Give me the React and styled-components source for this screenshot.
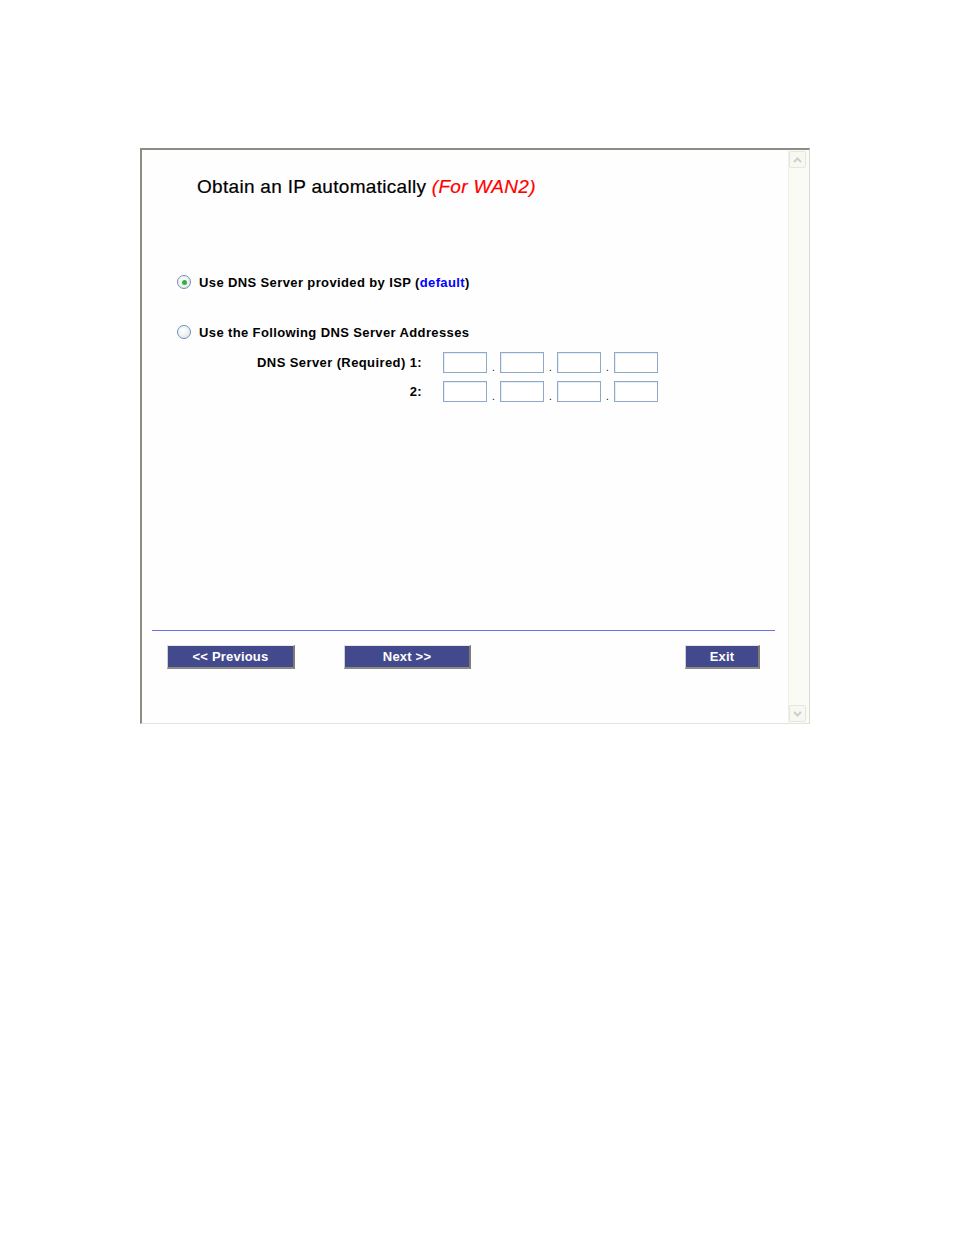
import React from "react";
import styled, { createGlobalStyle } from "styled-components";

const Global = createGlobalStyle`
  html, body { margin: 0; padding: 0; background: #ffffff; }
  body { font-family: "Liberation Sans", Arial, sans-serif; }
`;

const Page = styled.div`
  width: 954px;
  height: 1235px;
  padding: 148px 0 0 140px;
  box-sizing: border-box;
`;

const Frame = styled.div`
  width: 670px;
  height: 576px;
  box-sizing: border-box;
  display: flex;
  border-top: 2px solid #8c8c84;
  border-left: 2px solid #8c8c84;
  border-right: 1px solid #dcdcd4;
  border-bottom: 1px solid #e4e4dc;
  background: #fefefe;
`;

const Content = styled.div`
  flex: 1;
  display: flex;
  flex-direction: column;
  padding: 0 13px 0 10px;
`;

const Title = styled.h1`
  margin: 26px 0 0 45px;
  font-size: 19px;
  line-height: 22px;
  font-weight: normal;
  color: #000;
  letter-spacing: 0.3px;
  -webkit-text-stroke: 0.2px #000;
`;

const Red = styled.span`
  color: #ff0000;
  font-style: italic;
  -webkit-text-stroke: 0.2px #ff0000;
`;

const RadioRow = styled.label`
  display: flex;
  align-items: center;
  gap: 8px;
  height: 16px;
  margin: ${(p) => p.$top}px 0 0 25px;
  font-size: 13px;
  font-weight: bold;
  letter-spacing: 0.38px;
  color: #000;
`;

const RadioDot = styled.span`
  width: 14px;
  height: 14px;
  border-radius: 50%;
  box-sizing: border-box;
  border: 1px solid #6f8fb5;
  background: radial-gradient(circle at 40% 35%, #ffffff 0%, #eef0f2 55%, #d8dce2 100%);
  display: flex;
  align-items: center;
  justify-content: center;
  &::after {
    content: "";
    width: 5px;
    height: 5px;
    border-radius: 50%;
    background: ${(p) => (p.$checked ? "#2fb43a" : "transparent")};
  }
`;

const Blue = styled.span`
  color: #0000ff;
`;

const DnsGrid = styled.div`
  display: grid;
  grid-template-columns: 270px auto;
  column-gap: 21px;
  row-gap: 8px;
  margin-top: 12px;
  align-items: center;
`;

const DnsLabel = styled.div`
  text-align: right;
  font-size: 13px;
  font-weight: bold;
  letter-spacing: 0.4px;
  color: #000;
`;

const IpGroup = styled.div`
  display: flex;
  align-items: flex-end;
`;

const IpBox = styled.input`
  width: 44px;
  height: 21px;
  box-sizing: border-box;
  border: 1px solid #8fa9cb;
  box-shadow: inset 1px 1px 0 #e6edf5;
  background: #ffffff;
  padding: 0;
  margin: 0;
  outline: none;
`;

const Dot = styled.span`
  width: 13px;
  text-align: center;
  font-size: 10px;
  line-height: 10px;
  color: #000;
`;

const Rule = styled.hr`
  margin: auto 0 0 0;
  border: none;
  border-top: 1px solid #6e6ee6;
  height: 0;
`;

const ButtonBar = styled.div`
  display: flex;
  align-items: center;
  padding: 14px 15px 0 15px;
  height: 23px;
  margin-bottom: 55px;
`;

const NavButton = styled.button`
  width: ${(p) => p.$w}px;
  height: 24px;
  margin-right: ${(p) => p.$gap || 0}px;
  margin-left: ${(p) => (p.$right ? "auto" : "0")};
  box-sizing: border-box;
  background: #424a8d;
  color: #ffffff;
  font-family: "Liberation Sans", Arial, sans-serif;
  font-weight: bold;
  font-size: 13px;
  letter-spacing: 0.2px;
  padding: 0;
  border-top: 1px solid #e8e8e0;
  border-left: 1px solid #d0d0c8;
  border-right: 2px solid #7c7c74;
  border-bottom: 2px solid #8c8c84;
  cursor: pointer;
`;

const Scrollbar = styled.div`
  width: 19px;
  display: flex;
  flex-direction: column;
  justify-content: space-between;
  background: #fbfbf6;
  border-left: 1px solid #efefe8;
  padding: 1px 1px 1px 0;
`;

const ScrollBtn = styled.div`
  width: 17px;
  height: 17px;
  box-sizing: border-box;
  border: 1px solid #e6e6de;
  border-radius: 2px;
  background: #f8f8f3;
  display: flex;
  align-items: center;
  justify-content: center;
`;

const Chevron = ({ down }) => (
  <svg width="9" height="6" viewBox="0 0 9 6">
    <path
      d={down ? "M1 1 L4.5 4.5 L8 1" : "M1 5 L4.5 1.5 L8 5"}
      fill="none"
      stroke="#cfcfca"
      strokeWidth="2"
    />
  </svg>
);

const IpInputs = () => (
  <IpGroup>
    <IpBox />
    <Dot>.</Dot>
    <IpBox />
    <Dot>.</Dot>
    <IpBox />
    <Dot>.</Dot>
    <IpBox />
  </IpGroup>
);

export default function App() {
  return (
    <>
      <Global />
      <Page>
        <Frame>
          <Content>
            <Title>
              Obtain an IP automatically <Red>(For WAN2)</Red>
            </Title>
            <RadioRow $top={76}>
              <RadioDot $checked />
              <span>
                Use DNS Server provided by ISP (<Blue>default</Blue>)
              </span>
            </RadioRow>
            <RadioRow $top={34}>
              <RadioDot />
              <span>Use the Following DNS Server Addresses</span>
            </RadioRow>
            <DnsGrid>
              <DnsLabel>DNS Server (Required) 1:</DnsLabel>
              <IpInputs />
              <DnsLabel>2:</DnsLabel>
              <IpInputs />
            </DnsGrid>
            <Rule />
            <ButtonBar>
              <NavButton $w={128} $gap={49}>&lt;&lt; Previous</NavButton>
              <NavButton $w={127}>Next &gt;&gt;</NavButton>
              <NavButton $w={75} $right>Exit</NavButton>
            </ButtonBar>
          </Content>
          <Scrollbar>
            <ScrollBtn>
              <Chevron />
            </ScrollBtn>
            <ScrollBtn>
              <Chevron down />
            </ScrollBtn>
          </Scrollbar>
        </Frame>
      </Page>
    </>
  );
}
